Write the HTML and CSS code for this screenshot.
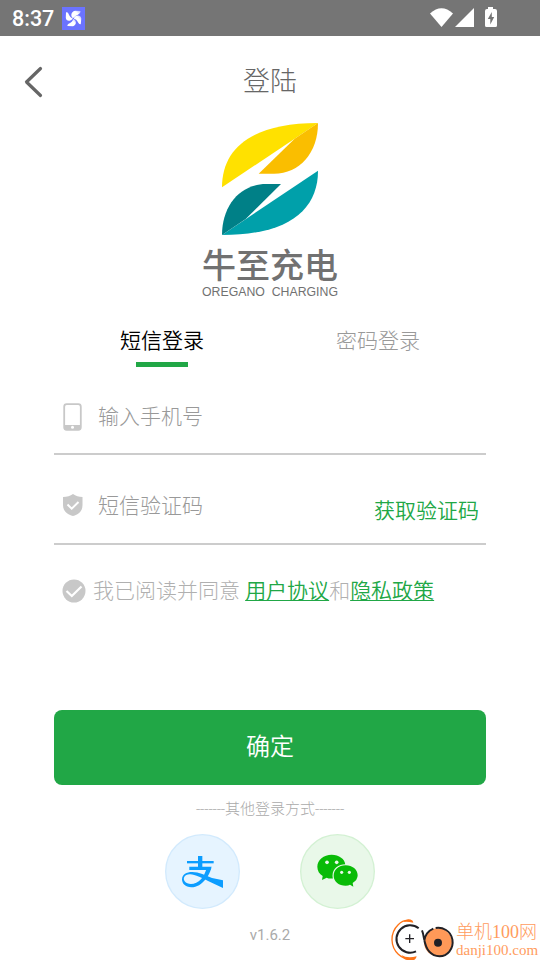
FILE: index.html
```html
<!DOCTYPE html>
<html lang="zh-CN">
<head>
<meta charset="utf-8">
<title>登陆</title>
<link rel="stylesheet" href="styles.css">
</head>
<body>
<div class="status">
  <span class="time">8:37</span>
  <svg class="app-icon" viewBox="0 0 23 23">
    <defs><linearGradient id="fan" x1="0" y1="1" x2="1" y2="0"><stop offset="0" stop-color="#fff"/><stop offset=".65" stop-color="#fff"/><stop offset="1" stop-color="#aeb4ff"/></linearGradient></defs>
    <rect width="23" height="23" fill="#6b73ff"/>
    <g fill="url(#fan)">
      <path d="M11 11C8.500 10 8.500 5 13 3.800L18.500 4C19 7 14 8 12 10.500Z"/>
      <path d="M12 11C14 7.500 19 8 19.300 11.500L18.800 17C16.500 18.500 16 12.500 12 11.800Z"/>
      <path d="M11.500 12C15 14 14.500 18 11 19.200L5.500 19C4.500 16.500 10.500 16 11 12.500Z"/>
      <path d="M10.600 12C7.500 15 4 14 3.800 10.500L4 5.500C7 4 6.500 10.500 10.600 11.300Z"/>
    </g>
  </svg>
  <svg class="signals" viewBox="0 0 68 22">
    <g fill="#fff">
      <path d="M0 6.500Q11.500-4 23 6.500L11.500 20Z"/>
      <path d="M25 20L44 1V20Z"/>
      <path d="M58 0h5v2h2q2 0 2 2v14.500q0 1.500-1.500 1.500h-9q-1.500 0-1.500-1.500V4q0-2 2-2h1Z"/>
    </g>
    <path d="M61.800 5L57.800 12H60.300V17.500L64.200 10H61.800Z" fill="#757575"/>
  </svg>
</div>
<header class="nav">
  <svg class="back" viewBox="0 0 20 32"><path d="M16.500 2.500L2.500 16L16.500 29.500" fill="none" stroke="#666" stroke-width="3.200" stroke-linecap="round" stroke-linejoin="round"/></svg>
  <h1>登陆</h1>
</header>
<main>
  <section class="brand">
    <svg class="leaf" viewBox="96 36 294 342">
      <path fill="#ffe100" d="M99 232C99 115 188 39 387 39L317 86Z"/>
      <path fill="#fabe00" d="M387 39C387 128 332 191 255 191H209L317 86Z"/>
      <path fill="#00a0aa" d="M387 182C387 300 298 375 99 375Z"/>
      <path fill="#008087" d="M99 375C99 286 154 222 231 222H276L170 327Z"/>
    </svg>
    <div class="brand-cn">牛至充电</div>
    <div class="brand-en">OREGANO&nbsp; CHARGING</div>
  </section>
  <nav class="tabs"><span class="tab active">短信登录</span><span class="tab">密码登录</span></nav>
  <div class="field">
    <svg class="field-icon" viewBox="0 0 22 30"><rect x="2.200" y="2.200" width="16.600" height="25.600" rx="2.500" fill="#fff" stroke="#c8c8c8" stroke-width="1.800"/><path d="M2 23H19V26Q19 28 17 28H4Q2 28 2 26Z" fill="#c8c8c8"/><circle cx="10.500" cy="25.200" r="1.500" fill="#fff"/></svg>
    <span>输入手机号</span>
  </div>
  <div class="field">
    <svg class="field-icon shield" viewBox="0 0 22 24"><path d="M11 1Q15 4 20.500 4V12C20.500 18 17 21.500 11 23C5 21.500 1 18 1 12V4Q7 4 11 1Z" fill="#c8c8c8"/><path d="M5.500 11.500L9.700 15.600L16.500 9" fill="none" stroke="#fff" stroke-width="2"/></svg>
    <span>短信验证码</span>
    <span class="get-code">获取验证码</span>
  </div>
  <div class="agree">
    <svg class="check" viewBox="0 0 24 24"><circle cx="12" cy="12" r="11.500" fill="#c8c8c8"/><path d="M4.500 12L9.800 17L19.500 7.500" fill="none" stroke="#fff" stroke-width="2.200"/></svg>
    <p>我已阅读并同意 <u>用户协议</u>和<u>隐私政策</u></p>
  </div>
  <div class="submit">确定</div>
</main>
<footer>
  <div class="others"><span class="dash">-------</span>其他登录方式<span class="dash">-------</span></div>
  <div class="socials">
    <svg class="social" viewBox="45 132 225 225">
      <circle cx="157.500" cy="244.500" r="110.500" fill="#e6f4ff" stroke="#d2eafd" stroke-width="4"/>
      <g fill="#0c9dff"><path d="M144 198H157V234H144Z"/><path d="M111 213H191V220H111Z"/><path d="M118 230H185L181 240H118Z"/><path d="M219 271V294L187 279C155 264 133 252 119 253C103 254 98 265 104 274C114 287 139 284 153 268C161 259 166 248 170 234H184C180 249 175 257 168 266C154 284 141 291 124 292C106 292 96 281 96 268C97 253 109 246 127 246C147 246 167 257 186 264Z"/></g>
    </svg>
    <svg class="social" viewBox="450 132 225 225">
      <circle cx="562.500" cy="244.500" r="110.500" fill="#e9f8e9" stroke="#d3f1d3" stroke-width="4"/>
      <g fill="#09bb07">
        <path d="M545 194C521 194 502 209 502 230C502 242 508 252 518 258L516 270L530 263Q538 267 551 265L586 224C585 207 567 194 545 194Z"/>
        <path d="M587 226C566 226 551 239 551 257C551 275 567 287 587 287Q595 287 600 284L610 290L608 279Q623 270 623 256C623 239 607 226 587 226Z" stroke="#e9f8e9" stroke-width="7" paint-order="stroke"/>
      </g>
      <g fill="#e9f8e9"><circle cx="531" cy="217" r="5.500"/><circle cx="560" cy="217" r="5.500"/><circle cx="575" cy="247" r="4.700"/><circle cx="598" cy="247" r="4.700"/></g>
    </svg>
  </div>
  <div class="version">v1.6.2</div>
</footer>
<div class="watermark">
  <svg class="mark" viewBox="30 20 195 135">
    <path d="M95 33C67 21 35 53 36 89C37 122 63 150 103 149" fill="none" stroke="#ff7417" stroke-width="4"/>
    <path d="M70 35Q82 21 98 31L100 37Q82 33 70 35ZM64 134Q81 145 110 138Q107 152 90 151Q72 149 64 134Z" fill="#ff7417"/>
    <path d="M116 54A41 41 0 1 0 108 123" fill="none" stroke="#222126" stroke-width="6"/>
    <circle cx="174" cy="96" r="42" fill="#ff9958"/>
    <path d="M126 60C134 78 130 105 148 124C164 142 193 143 208 124C225 103 219 71 198 59Q183 50 167 53M160 55Q137 65 133 90" fill="none" stroke="#222126" stroke-width="6"/>
    <circle cx="174" cy="97" r="12" fill="#222126"/><path d="M76 85H102M89 72V98" stroke="#222126" stroke-width="4"/>
  </svg>
  <div class="mark-text"><div class="mark-cn">单机100网</div><div class="mark-en">danji100.com</div></div>
</div>
</body>
</html>
```

FILE: styles.css
```css
* { box-sizing: border-box; }
body { margin: 0; width: 540px; height: 960px; background: #fff; overflow: hidden; font-family: Roboto, "Noto Sans CJK SC", sans-serif; font-weight: 300; }
svg { display: block; flex: none; }
.status { height: 36px; background: #757575; display: flex; align-items: center; padding: 0 42px 0 12px; }
.time { color: #fff; font-size: 21.5px; font-weight: 500; line-height: 36px; width: 50px; padding-top: 2px; }
.app-icon { width: 23px; height: 23px; margin-top: 1px; }
.signals { width: 68px; height: 22px; margin-left: auto; }
.nav { height: 86px; display: grid; grid-template-columns: 60px 1fr 60px; align-items: center; padding-top: 5px; }
.back { width: 20px; height: 32px; margin-left: 24px; }
h1 { margin: 0; font-size: 27px; line-height: 40px; font-weight: 300; text-align: center; color: #666; }
.brand { height: 190px; display: flex; flex-direction: column; align-items: center; }
.leaf { width: 98px; height: 114px; }
.brand-cn { font-size: 34px; font-weight: 500; line-height: 42px; margin-top: 9px; color: #717171; white-space: nowrap; }
.brand-en { font-family: "Liberation Sans", sans-serif; font-weight: 400; font-size: 12.3px; line-height: 14px; margin-top: -2px; color: #717171; white-space: nowrap; }
.tabs { height: 55px; display: grid; grid-template-columns: 1fr 1fr; padding: 0 54px; }
.tab { justify-self: center; font-size: 21px; line-height: 32px; padding-top: 13px; color: #999; }
.tab.active { color: #000; font-weight: 350; }
.tab.active::after { content: ""; display: block; width: 52px; height: 5px; background: #21a746; margin: 5px auto 0; }
.tab + .tab { justify-self: center; }
.field { height: 90px; margin: 0 54px; border-bottom: 2px solid #ccc; display: flex; align-items: center; padding: 14px 7px 0 8px; font-size: 21px; line-height: 32px; color: #999; }
.tabs + .field { height: 88px; }
.field-icon { width: 22px; height: 30px; margin-right: 14px; }
.shield { height: 24px; margin-top: -2px; }
.get-code { margin-left: auto; color: #21a746; font-weight: 350; padding-top: 10px; }
.agree { display: flex; align-items: center; margin: 30px 54px 0 62px; height: 32px; font-size: 21px; color: #b0b0b0; }
.check { width: 24px; height: 24px; margin-right: 7px; }
.agree p { margin: 0; line-height: 32px; white-space: nowrap; }
.agree u { color: #21a746; font-weight: 350; text-decoration-thickness: 1px; text-underline-offset: 2px; }
.submit { margin: 103px 54px 0; height: 75px; border-radius: 8px; background: #21a746; color: #fff; font-size: 24px; font-weight: 350; line-height: 75px; text-align: center; }
footer { display: flex; flex-direction: column; align-items: center; color: #aaa; }
.others { font-size: 15px; line-height: 24px; margin-top: 12px; display: flex; }
.dash { letter-spacing: -.15px; }
.socials { display: flex; gap: 60px; margin-top: 13px; }
.social { width: 75px; height: 75px; }
.version { font-size: 15px; line-height: 20px; font-weight: 400; margin-top: 16px; }
.watermark { position: absolute; left: 390px; top: 917px; display: flex; }
.mark { width: 65px; height: 45px; }
.mark-text { width: 84px; margin-left: 1px; color: #ff9c5e; font-family: "Liberation Serif", "Noto Sans CJK SC", serif; font-weight: 300; white-space: nowrap; }
.mark-cn { font-size: 18px; line-height: 22px; margin-top: 4px; }
.mark-en { font-size: 15px; line-height: 15px; }
```
